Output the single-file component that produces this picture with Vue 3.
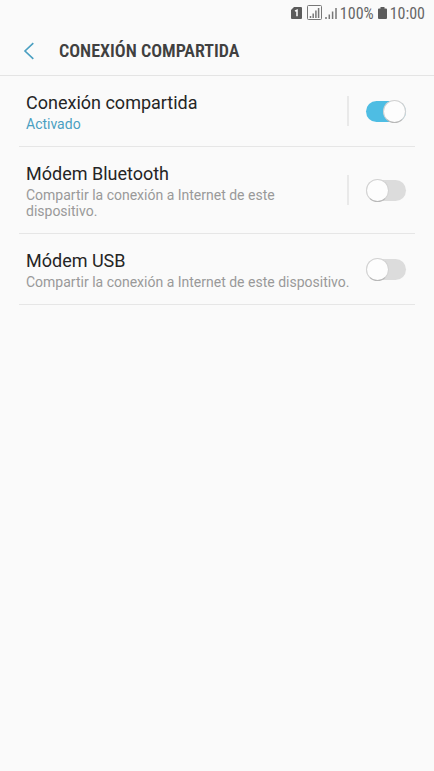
<script setup>
import { ref } from 'vue'

const items = ref([
  { id: 'hotspot', title: 'Conexión compartida', note: 'Activado', on: true, split: true },
  { id: 'bluetooth', title: 'Módem Bluetooth', note: 'Compartir la conexión a Internet de este dispositivo.', on: false, split: true },
  { id: 'usb', title: 'Módem USB', note: 'Compartir la conexión a Internet de este dispositivo.', on: false, split: false },
])
</script>

<template>
  <div class="screen">
    <div class="status">
      <svg class="sim" width="11" height="12" viewBox="0 0 11 12" aria-hidden="true">
        <path d="M3 0h7a1 1 0 0 1 1 1v10a1 1 0 0 1-1 1H1a1 1 0 0 1-1-1V3z" fill="#5c5c5c" />
        <path d="M4 4.200 6 3.200v6" fill="none" stroke="#fff" stroke-width="1.5" />
      </svg>
      <svg class="signal" width="31" height="16" viewBox="0 0 31 16" aria-hidden="true">
        <rect x=".5" y=".5" width="14" height="14" rx="1" fill="none" stroke="#777" />
        <path d="M3.5 11v2M6.2 8.500v4.500M8.900 5.500v7.500M11.600 3v10" stroke="#777" stroke-width="1.500" />
        <path d="M19 12v2M22.300 9.500v4.500M25.600 6.500v7.500M29 3v11" stroke="#777" stroke-width="1.500" />
      </svg>
      <span>100%</span>
      <svg class="battery" width="9" height="12" viewBox="0 0 9 12" aria-hidden="true">
        <path d="M2.500 0h4v1.500H8a1 1 0 0 1 1 1V11a1 1 0 0 1-1 1H1a1 1 0 0 1-1-1V2.500a1 1 0 0 1 1-1h1.500z" fill="#5c5c5c" />
      </svg>
      <time>10:00</time>
    </div>

    <header class="bar">
      <button class="back" type="button" aria-label="Atrás">
        <svg width="12" height="18" viewBox="0 0 12 18" aria-hidden="true">
          <path d="M10.300 1.200 2 9l8.300 7.800" fill="none" stroke="#4a9fc1" stroke-width="1.600" />
        </svg>
      </button>
      <h1>CONEXIÓN COMPARTIDA</h1>
    </header>

    <main class="list">
      <div v-for="item in items" :key="item.id" class="row">
        <label class="text" :for="item.id">
          <span class="title">{{ item.title }}</span>
          <span class="note" :class="{ active: item.on }">{{ item.note }}</span>
        </label>
        <span v-if="item.split" class="divider"></span>
        <input :id="item.id" v-model="item.on" class="switch" type="checkbox" role="switch" />
      </div>
    </main>
  </div>
</template>

<style>
body {
  background: #fafafa;
}
</style>

<style scoped>
.screen {
  min-height: 100vh;
  background: #fafafa;
  color: #252525;
  font-family: Roboto, "Liberation Sans", sans-serif;
}

.status {
  display: flex;
  align-items: center;
  justify-content: flex-end;
  height: 26px;
  padding-right: 9px;
  color: #666;
  font-family: "Roboto Condensed", Roboto, sans-serif;
  font-size: 16px;
}

.sim {
  margin-right: 5px;
}

.signal {
  margin-right: 2px;
}

.battery {
  margin: 0 3px 0 4px;
}

.bar {
  display: flex;
  align-items: center;
  height: 49px;
  padding-left: 16px;
  border-bottom: 1px solid #e4e4e4;
}

.back {
  display: flex;
  align-items: center;
  justify-content: center;
  width: 26px;
  height: 32px;
  padding: 0;
  border: 0;
  background: none;
}

h1 {
  margin: 0 0 0 17px;
  color: #404040;
  font-family: "Roboto Condensed", "Liberation Sans Narrow", sans-serif;
  font-size: 18px;
  font-weight: 600;
  line-height: 24px;
}

.list {
  padding: 0 19px;
}

.row {
  display: flex;
  align-items: center;
  padding: 14px 9px 14px 7px;
  border-bottom: 1px solid #e6e6e6;
}

.text {
  flex: 1;
  min-width: 0;
}

.title,
.note {
  display: block;
}

.title {
  font-size: 18px;
  line-height: 26px;
}

.note {
  color: #999;
  font-size: 14px;
  line-height: 16px;
}

.note.active {
  color: #4a9fc1;
}

.divider {
  width: 2px;
  height: 30px;
  margin: 0 17px 0 16px;
  background: #e9e9e9;
}

.switch {
  display: flex;
  align-items: center;
  flex: none;
  appearance: none;
  width: 40px;
  height: 21px;
  margin: 0;
  border-radius: 11px;
  background: #dcdcdc;
}

.switch::before {
  content: "";
  box-sizing: border-box;
  width: 23px;
  height: 23px;
  flex: none;
  border: 1px solid #d2d2d2;
  border-bottom-color: #b8b8b8;
  border-radius: 50%;
  background: #fdfdfd;
}

.switch:checked {
  justify-content: flex-end;
  background: #4ebde3;
}
</style>
